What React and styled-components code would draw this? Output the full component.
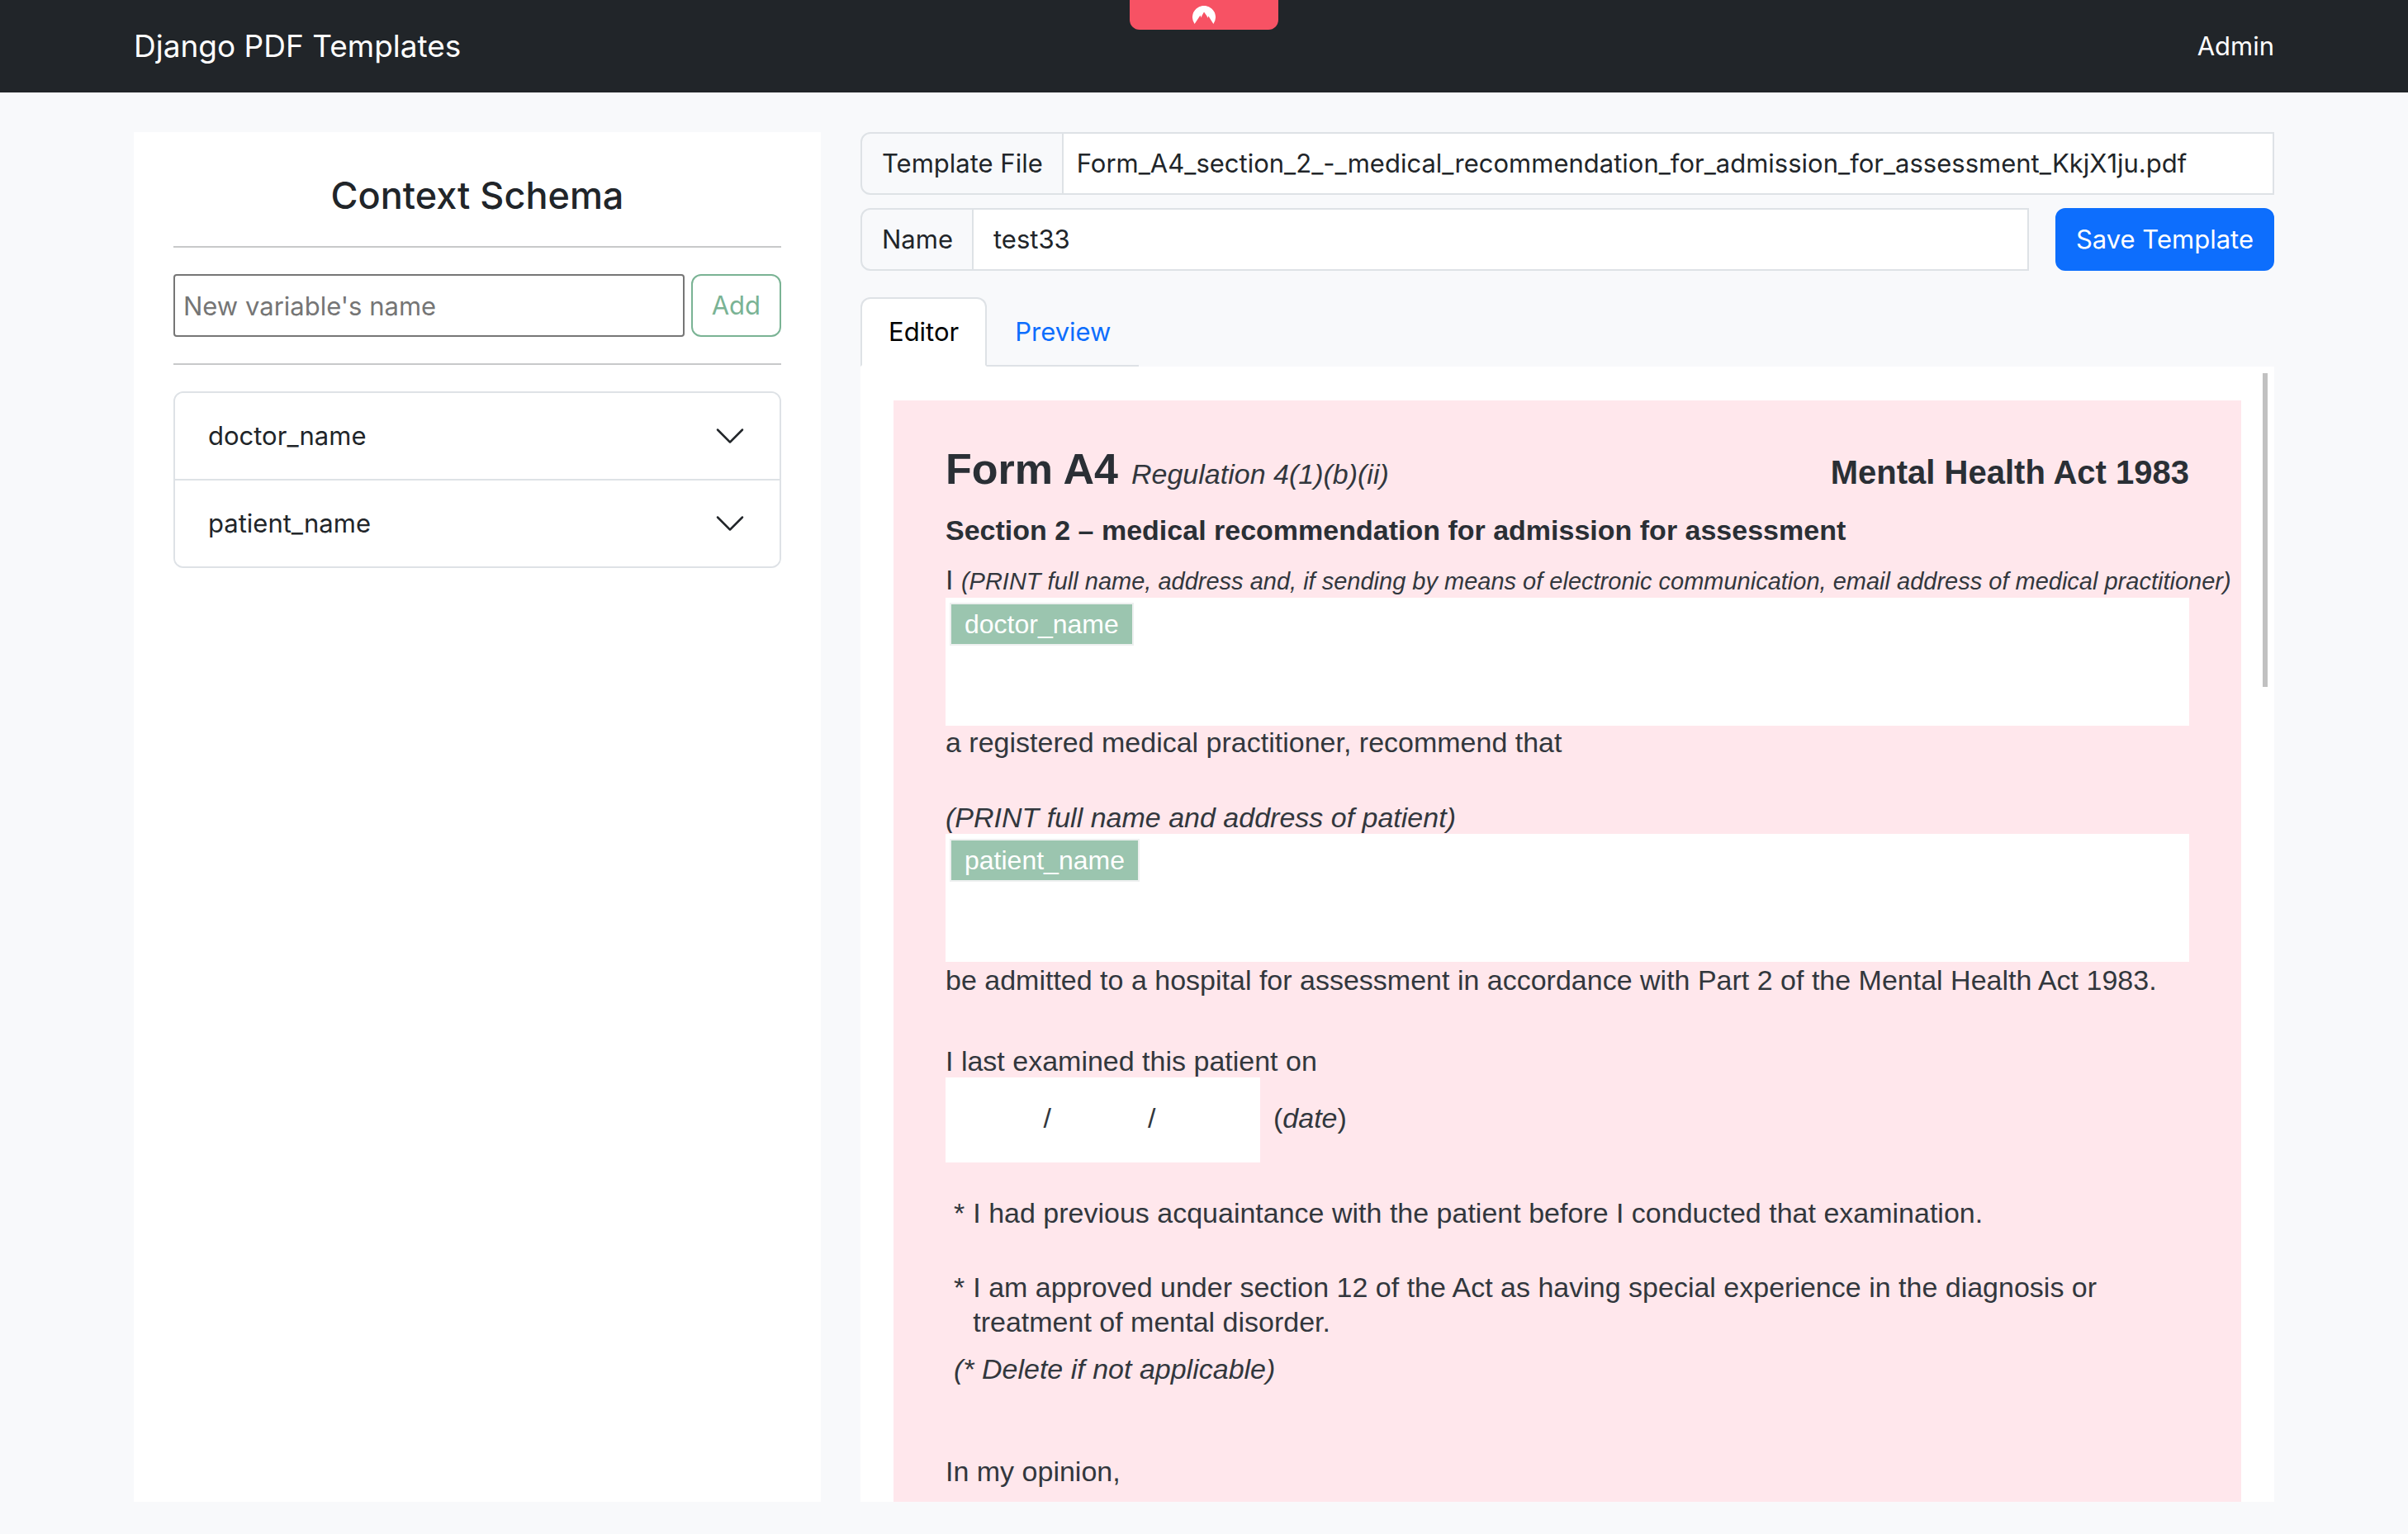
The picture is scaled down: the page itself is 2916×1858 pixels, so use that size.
import React, { useState } from "react";
import styled, { createGlobalStyle } from "styled-components";

const GlobalStyle = createGlobalStyle`
  *, *::before, *::after { box-sizing: border-box; }
  body {
    margin: 0;
    background: #f8f9fb;
    color: #212529;
    font-family: Inter, "Liberation Sans", sans-serif;
    font-size: 31px;
    line-height: 48px;
  }
  button, input { font: inherit; color: inherit; }
`;

const Page = styled.div`
  height: 100vh;
  display: flex;
  flex-direction: column;
`;

const Navbar = styled.nav`
  position: relative;
  background: #212529;
  color: #fff;
  flex: none;
`;

const Container = styled.div`
  width: 100%;
  max-width: 2640px;
  margin: 0 auto;
  padding: 0 24px;
`;

const NavInner = styled(Container)`
  height: 112px;
  display: flex;
  align-items: center;
  justify-content: space-between;
`;

const NavLink = styled.a`
  color: #fff;
  text-decoration: none;
  font-size: ${(p) => (p.$brand ? "37px" : "31px")};
`;

const VpnBadge = styled.div`
  position: absolute;
  top: 0;
  left: 50%;
  transform: translateX(-50%);
  width: 180px;
  height: 36px;
  display: flex;
  align-items: center;
  justify-content: center;
  background: #f75264;
  border-radius: 0 0 12px 12px;
`;

const Columns = styled(Container)`
  flex: 1;
  min-height: 0;
  display: grid;
  grid-template-columns: minmax(0, 832fr) minmax(0, 1712fr);
  gap: 48px;
  padding-top: 48px;
  padding-bottom: 39px;
`;

const Sidebar = styled.aside`
  background: #fff;
  padding: 48px;
`;

const Title = styled.h1`
  margin: 0;
  font-size: 45px;
  font-weight: 500;
  line-height: 58px;
  text-align: center;
`;

const Rule = styled.hr`
  margin: 32px 0;
  border: 0;
  border-top: 2px solid #c8c9ca;
`;

const AddForm = styled.form`
  display: flex;
  gap: 8px;
`;

const VariableInput = styled.input`
  flex: 1;
  min-width: 0;
  height: 76px;
  padding: 2px 10px;
  border: 2px solid #767676;
  border-radius: 4px;
  background: #fff;
  &::placeholder { color: #757575; opacity: 1; }
`;

const Button = styled.button`
  height: 76px;
  padding: 0 23px;
  border: 2px solid ${(p) => (p.$outline ? "#7ab394" : "#0d6efd")};
  border-radius: 12px;
  background: ${(p) => (p.$outline ? "#fff" : "#0d6efd")};
  color: ${(p) => (p.$outline ? "#7ab394" : "#fff")};
  white-space: nowrap;
`;

const Accordion = styled.div`
  border: 2px solid #dee2e6;
  border-radius: 12px;
  overflow: hidden;
`;

const AccordionButton = styled.button`
  width: 100%;
  height: 104px;
  display: flex;
  align-items: center;
  justify-content: space-between;
  padding: 0 40px;
  border: 0;
  background: #fff;
  text-align: left;
  & + & {
    height: 106px;
    border-top: 2px solid #dee2e6;
  }
`;

const Main = styled.main`
  min-width: 0;
  min-height: 0;
  display: flex;
  flex-direction: column;
`;

const FieldRow = styled.div`
  display: flex;
  gap: 32px;
  margin-bottom: ${(p) => (p.$last ? "32px" : "16px")};
`;

const InputGroup = styled.div`
  flex: 1;
  min-width: 0;
  height: 76px;
  display: flex;
  border: 2px solid #dee2e6;
  border-radius: 12px 0 0 12px;
  overflow: hidden;
`;

const GroupLabel = styled.label`
  display: flex;
  align-items: center;
  padding: 0 23px 0 24px;
  border-right: 2px solid #dee2e6;
  white-space: nowrap;
`;

const GroupInput = styled.input`
  flex: 1;
  min-width: 0;
  padding: 0 ${(p) => (p.$compact ? "16px" : "24px")};
  border: 0;
  background: #fff;
`;

const Tabs = styled.div`
  align-self: flex-start;
  display: flex;
  height: 84px;
  border-bottom: 2px solid #dee2e6;
`;

const Tab = styled.button`
  height: 84px;
  padding: 0 32px;
  border: 2px solid transparent;
  border-radius: 12px 12px 0 0;
  background: transparent;
  color: #0d6efd;
  &[aria-selected="true"] {
    border-color: #dee2e6 #dee2e6 #fff;
    background: #fff;
    color: #000;
  }
`;

const Viewer = styled.div`
  position: relative;
  flex: 1;
  min-height: 0;
  background: #fff;
`;

const ScrollArea = styled.div`
  height: 100%;
  overflow-y: auto;
  scrollbar-width: none;
  padding: 41px 40px 0;
`;

const ScrollThumb = styled.div`
  position: absolute;
  top: 8px;
  right: 8px;
  width: 6px;
  height: 380px;
  background: #c1c1c1;
`;

const Paper = styled.article`
  min-height: 2200px;
  padding: 53px 63px 0;
  background: #ffe7ec;
  color: #32373d;
  font-family: "Liberation Sans", Arial, sans-serif;
  font-size: 34px;
  line-height: 40px;
`;

const PaperHeader = styled.header`
  display: flex;
  align-items: baseline;
  line-height: 60px;
  gap: 16px;
`;

const FormTitle = styled.h2`
  margin: 0;
  font-size: 52px;
  line-height: 60px;
  color: #2a2f35;
`;

const ActName = styled.strong`
  margin-left: auto;
  font-size: 40px;
  color: #2a2f35;
`;

const SectionTitle = styled.h3`
  margin: 18px 0 20px;
  font-size: 34px;
  line-height: 40px;
  color: #2a2f35;
`;

const Line = styled.p`
  margin: ${(p) => p.$gap || 0}px 0 0;
  white-space: nowrap;
`;

const Hint = styled.em`
  font-size: 29px;
`;

const Box = styled.div`
  height: 155px;
  padding: 6px 5px;
  background: #fff;
`;

const Tag = styled.span`
  display: inline-block;
  padding: 0 16px;
  border: 2px solid #eef0f0;
  background: #9bc5af;
  color: #fff;
  font-size: 32px;
  line-height: 48px;
`;

const DateRow = styled.div`
  display: flex;
  align-items: center;
  gap: 16px;
`;

const DateBox = styled.div`
  width: 381px;
  height: 103px;
  display: flex;
  align-items: center;
  justify-content: center;
  gap: 117px;
  padding: 0 8px 6px 0;
  background: #fff;
`;

const DateCaption = styled.span`
  padding-bottom: 6px;
`;

const Notes = styled.ul`
  margin: 40px 0 0;
  padding: 0 0 0 10px;
  list-style: none;
`;

const Note = styled.li`
  display: flex;
  gap: 10px;
  line-height: 42px;
  & + & { margin-top: 48px; }
`;

const Footnote = styled(Line)`
  padding-left: 10px;
`;

const Chevron = () => (
  <svg width="40" height="40" viewBox="0 0 16 16" fill="#212529" aria-hidden="true">
    <path
      fillRule="evenodd"
      d="M1.646 4.646a.5.5 0 0 1 .708 0L8 10.293l5.646-5.647a.5.5 0 0 1 .708.708l-6 6a.5.5 0 0 1-.708 0l-6-6a.5.5 0 0 1 0-.708z"
    />
  </svg>
);

const Mountain = () => (
  <svg width="28" height="22" viewBox="0 0 28 22" fill="#fff" aria-hidden="true">
    <path d="M2.6 22A14 14 0 1 1 25.4 22L19.4 12.4 18.4 14.8 17.4 12.2 14 7.6 11.2 12.6 11 14.4 9.4 11.8Z" />
  </svg>
);

const variables = ["doctor_name", "patient_name"];

export default function App() {
  const [tab, setTab] = useState("Editor");
  return (
    <Page>
      <GlobalStyle />
      <Navbar>
        <NavInner>
          <NavLink href="#" $brand>Django PDF Templates</NavLink>
          <NavLink href="#admin">Admin</NavLink>
        </NavInner>
        <VpnBadge><Mountain /></VpnBadge>
      </Navbar>
      <Columns>
        <Sidebar>
          <Title>Context Schema</Title>
          <Rule />
          <AddForm onSubmit={(e) => e.preventDefault()}>
            <VariableInput aria-label="New variable's name" placeholder="New variable's name" />
            <Button $outline>Add</Button>
          </AddForm>
          <Rule />
          <Accordion>
            {variables.map((name) => (
              <AccordionButton key={name} type="button" aria-expanded="false">
                {name}
                <Chevron />
              </AccordionButton>
            ))}
          </Accordion>
        </Sidebar>
        <Main>
          <FieldRow>
            <InputGroup>
              <GroupLabel htmlFor="file">Template File</GroupLabel>
              <GroupInput
                id="file"
                $compact
                readOnly
                value="Form_A4_section_2_-_medical_recommendation_for_admission_for_assessment_KkjX1ju.pdf"
              />
            </InputGroup>
          </FieldRow>
          <FieldRow $last>
            <InputGroup>
              <GroupLabel htmlFor="name">Name</GroupLabel>
              <GroupInput id="name" defaultValue="test33" />
            </InputGroup>
            <Button type="button">Save Template</Button>
          </FieldRow>
          <Tabs role="tablist">
            {["Editor", "Preview"].map((t) => (
              <Tab key={t} type="button" role="tab" aria-selected={tab === t} onClick={() => setTab(t)}>
                {t}
              </Tab>
            ))}
          </Tabs>
          <Viewer>
            <ScrollArea>
              <Paper>
                <PaperHeader>
                  <FormTitle>Form A4</FormTitle>
                  <em>Regulation 4(1)(b)(ii)</em>
                  <ActName>Mental Health Act 1983</ActName>
                </PaperHeader>
                <SectionTitle>Section 2 – medical recommendation for admission for assessment</SectionTitle>
                <Line>
                  I{" "}
                  <Hint>
                    (PRINT full name, address and, if sending by means of electronic communication, email address of
                    medical practitioner)
                  </Hint>
                </Line>
                <Box><Tag>doctor_name</Tag></Box>
                <Line>a registered medical practitioner, recommend that</Line>
                <Line $gap={51}><em>(PRINT full name and address of patient)</em></Line>
                <Box><Tag>patient_name</Tag></Box>
                <Line $gap={2}>
                  be admitted to a hospital for assessment in accordance with Part 2 of the Mental Health Act 1983.
                </Line>
                <Line $gap={58}>I last examined this patient on</Line>
                <DateRow>
                  <DateBox><span>/</span><span>/</span></DateBox>
                  <DateCaption>(<em>date</em>)</DateCaption>
                </DateRow>
                <Notes>
                  <Note>
                    <span>*</span>
                    <span>I had previous acquaintance with the patient before I conducted that examination.</span>
                  </Note>
                  <Note>
                    <span>*</span>
                    <span>
                      I am approved under section 12 of the Act as having special experience in the diagnosis or
                      <br />
                      treatment of mental disorder.
                    </span>
                  </Note>
                </Notes>
                <Footnote $gap={16}><em>(* Delete if not applicable)</em></Footnote>
                <Line $gap={84}>In my opinion,</Line>
              </Paper>
            </ScrollArea>
            <ScrollThumb aria-hidden="true" />
          </Viewer>
        </Main>
      </Columns>
    </Page>
  );
}
